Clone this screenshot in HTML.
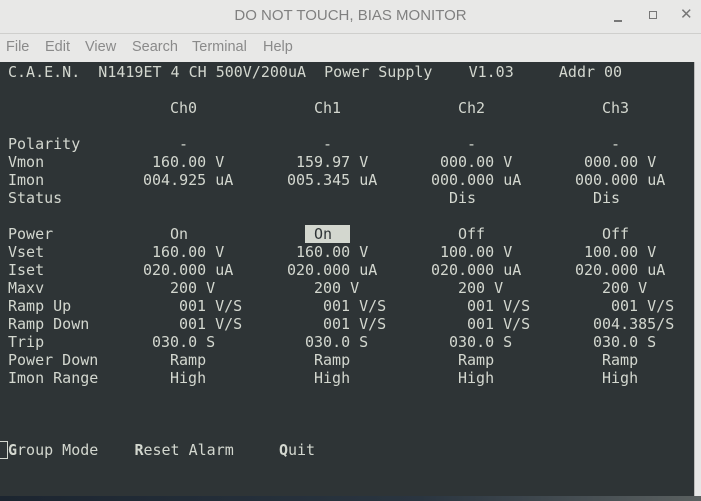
<!DOCTYPE html>
<html><head><meta charset="utf-8"><style>
body{margin:0;width:701px;height:501px;overflow:hidden;background:#2e3436;position:relative;font-family:"Liberation Sans",sans-serif}
#title{position:absolute;left:0;top:0;width:701px;height:33px;background:#e8e8e7;border-bottom:1px solid #cfcfcd}
#title .t{position:absolute;left:0;width:701px;top:7px;text-align:center;font-size:15px;color:#808080}
#menu{position:absolute;left:0;top:34px;width:701px;height:28px;background:#e8e8e7}
#menu span{position:absolute;top:5px;font-size:14.5px;color:#8a8a8a}
#term{position:absolute;left:0;top:62px;width:694px;height:434px;background:#2e3436}
.s{position:absolute;font-family:"DejaVu Sans Mono","Liberation Mono",monospace;font-size:15px;line-height:18px;color:#d3d7cf;white-space:pre}
#sb{position:absolute;left:694px;top:62px;width:7px;height:434px;background:#e6e6e6;border-left:1px solid #bbb}
#bot{position:absolute;left:0;top:496px;width:701px;height:5px;background:linear-gradient(90deg,#1c2530,#2a3540 60%,#5a6060)}
</style></head><body>
<div id="title"><div class="t">DO NOT TOUCH, BIAS MONITOR</div>
<div style="position:absolute;left:614px;top:20px;width:8px;height:2px;background:#777"></div>
<div style="position:absolute;left:649px;top:11px;width:6px;height:6px;border:1.5px solid #777"></div>
<div style="position:absolute;left:680px;top:5px;font-size:15px;color:#777">✕</div>
</div>
<div id="menu"><span style="left:6px">File</span><span style="left:45px">Edit</span><span style="left:85px">View</span><span style="left:132px">Search</span><span style="left:192px">Terminal</span><span style="left:263px">Help</span></div>
<div id="term"></div>
<div id="sb"></div>
<div id="bot"></div>

<div class="s" style="left:8px;top:63px">C.A.E.N.  N1419ET 4 CH 500V/200uA  Power Supply    V1.03     Addr 00</div>

<div class="s" style="left:170px;top:99px">Ch0</div><div class="s" style="left:314px;top:99px">Ch1</div><div class="s" style="left:458px;top:99px">Ch2</div><div class="s" style="left:602px;top:99px">Ch3</div>

<div class="s" style="left:8px;top:135px">Polarity
Vmon
Imon
Status

Power
Vset
Iset
Maxv
Ramp Up
Ramp Down
Trip
Power Down
Imon Range</div>

<div class="s" style="left:179px;top:135px">-</div><div class="s" style="left:323px;top:135px">-</div><div class="s" style="left:467px;top:135px">-</div><div class="s" style="left:611px;top:135px">-</div>

<div class="s" style="left:152px;top:153px">160.00 V</div><div class="s" style="left:296px;top:153px">159.97 V</div><div class="s" style="left:440px;top:153px">000.00 V</div><div class="s" style="left:584px;top:153px">000.00 V</div>

<div class="s" style="left:143px;top:171px">004.925 uA</div><div class="s" style="left:287px;top:171px">005.345 uA</div><div class="s" style="left:431px;top:171px">000.000 uA</div><div class="s" style="left:575px;top:171px">000.000 uA</div>

<div class="s" style="left:449px;top:189px">Dis</div><div class="s" style="left:593px;top:189px">Dis</div>

<div class="s" style="left:170px;top:225px">On</div>
<div class="s" style="left:305px;top:225px;width:45px;background:#d3d7cf;color:#2e3436"> On</div>
<div class="s" style="left:458px;top:225px">Off</div><div class="s" style="left:602px;top:225px">Off</div>

<div class="s" style="left:152px;top:243px">160.00 V</div><div class="s" style="left:296px;top:243px">160.00 V</div><div class="s" style="left:440px;top:243px">100.00 V</div><div class="s" style="left:584px;top:243px">100.00 V</div>

<div class="s" style="left:143px;top:261px">020.000 uA</div><div class="s" style="left:287px;top:261px">020.000 uA</div><div class="s" style="left:431px;top:261px">020.000 uA</div><div class="s" style="left:575px;top:261px">020.000 uA</div>

<div class="s" style="left:170px;top:279px">200 V</div><div class="s" style="left:314px;top:279px">200 V</div><div class="s" style="left:458px;top:279px">200 V</div><div class="s" style="left:602px;top:279px">200 V</div>

<div class="s" style="left:179px;top:297px">001 V/S</div><div class="s" style="left:323px;top:297px">001 V/S</div><div class="s" style="left:467px;top:297px">001 V/S</div><div class="s" style="left:611px;top:297px">001 V/S</div>

<div class="s" style="left:179px;top:315px">001 V/S</div><div class="s" style="left:323px;top:315px">001 V/S</div><div class="s" style="left:467px;top:315px">001 V/S</div><div class="s" style="left:593px;top:315px">004.385/S</div>

<div class="s" style="left:152px;top:333px">030.0 S</div><div class="s" style="left:305px;top:333px">030.0 S</div><div class="s" style="left:449px;top:333px">030.0 S</div><div class="s" style="left:593px;top:333px">030.0 S</div>

<div class="s" style="left:170px;top:351px">Ramp</div><div class="s" style="left:314px;top:351px">Ramp</div><div class="s" style="left:458px;top:351px">Ramp</div><div class="s" style="left:602px;top:351px">Ramp</div>

<div class="s" style="left:170px;top:369px">High</div><div class="s" style="left:314px;top:369px">High</div><div class="s" style="left:458px;top:369px">High</div><div class="s" style="left:602px;top:369px">High</div>

<div style="position:absolute;left:0;top:441px;width:7px;height:16px;border:1px solid #d3d7cf;border-left:none"></div>
<div class="s" style="left:8px;top:441px"><b>G</b>roup Mode    <b>R</b>eset Alarm     <b>Q</b>uit</div>
</body></html>
